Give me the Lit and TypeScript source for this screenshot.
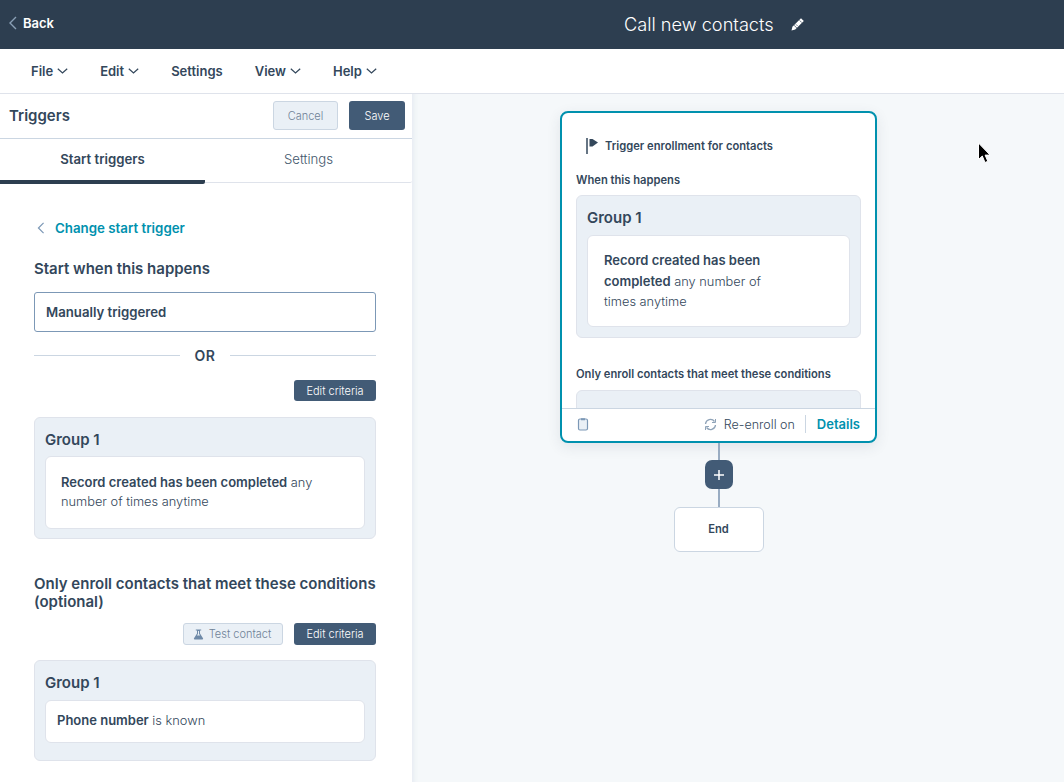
import { LitElement, html, css } from "lit";
import { customElement } from "lit/decorators.js";

const chev = html`<svg class="chev" width="11" height="6" viewBox="0 0 11 6"><path d="M.8.7 5.500 5 10.200.7" fill="none" stroke="currentColor" stroke-width="1.200"/></svg>`;
const back = (c: string, h: number) => html`<svg width="8" height="${h}" viewBox="0 0 8 14"><path d="M7 1 1 7l6 6" fill="none" stroke="${c}" stroke-width="1.400"/></svg>`;

@customElement("app-root")
export class AppRoot extends LitElement {
  static styles = css`
    :host { display: block; width: 1064px; height: 782px; overflow: hidden; position: relative; font-family: Inter, "Noto Sans", sans-serif; color: #33475b; background: #fff; font-size: 13px; }
    * { box-sizing: border-box; }
    b { font-weight: 600; }
    .top { height: 49px; background: #2d3e50; display: grid; grid-template-columns: 1fr 1fr; color: #fff; }
    .backlink { display: flex; align-items: center; gap: 6px; padding: 0 0 3px 9px; font-weight: 600; font-size: 13px; }
    .title { display: flex; align-items: center; gap: 16px; padding: 0 0 1px 92px; font-size: 18.200px; font-weight: 300; height: 49px; white-space: nowrap; }
    .menu { height: 45px; display: flex; align-items: center; padding: 0 0 0 31px; gap: 32px; border-bottom: 1px solid #dfe3eb; font-weight: 600; font-size: 13px; }
    .menu span { display: flex; align-items: center; gap: 4px; }
    .main { display: flex; height: 688px; }
    .panel { width: 412px; flex: none; height: 688px; overflow: hidden; background: #fff; }
    .phead { height: 45px; display: flex; align-items: center; padding: 0 7px 1px 9px; border-bottom: 1px solid #cbd6e2; }
    .phead h1 { font-size: 15px; font-weight: 600; margin: 0; flex: 1; }
    .btn { display: inline-flex; align-items: center; justify-content: center; border-radius: 3px; font-size: 11px; font-weight: 300; }
    .cancel { width: 65px; height: 29px; background: #eaf0f6; border: 1px solid #cbd6e2; color: #6f8297; margin-right: 11px; }
    .save { width: 56px; height: 29px; background: #425b76; color: #fff; }
    .tabs { display: flex; height: 45px; }
    .tab { width: 205px; height: 45px; display: flex; align-items: center; justify-content: center; padding-bottom: 1px; font-weight: 600; font-size: 13.200px; border-bottom: 4px solid #2d3e50; border-radius: 0 0 2px 0; }
    .tab.off { flex: 1; font-weight: 300; color: #42566b; border-bottom: 1px solid #dfe3eb; padding: 0 0 4px; margin-bottom: 1px; height: 44px; }
    .content { padding: 35px 36px 0 34px; }
    .change { display: flex; align-items: center; gap: 10px; padding-left: 3px; height: 18px; color: #0091ae; font-weight: 600; font-size: 13.300px; }
    h2 { font-size: 15px; font-weight: 600; margin: 0; line-height: 18px; }
    .start { margin-top: 23px; }
    .input { margin-top: 14px; height: 40px; border: 1px solid #7c98b6; border-radius: 3px; display: flex; align-items: center; padding-left: 11px; font-weight: 600; font-size: 13.200px; }
    .or { margin-top: 14px; display: flex; align-items: center; gap: 14px; font-weight: 600; font-size: 14px; letter-spacing: .6px; height: 18px; }
    .or i { flex: 1; height: 1px; background: #cbd6e2; }
    .actions { display: flex; justify-content: flex-end; gap: 11px; }
    .a1 { margin-top: 16px; }
    .edit { width: 82px; height: 21px; background: #425b76; color: #fff; }
    .edit.tall { height: 22px; }
    .test { width: 100px; height: 22px; background: #eaf0f6; border: 1px solid #cbd6e2; color: #6f8297; gap: 5px; padding-right: 2px; }
    .group { background: #eaf0f6; border: 1px solid #dfe3eb; border-radius: 6px; padding: 12px 10px 0; }
    .group h3 { margin: 0 0 7px; font-size: 15px; font-weight: 600; line-height: 20px; }
    .rule { background: #fff; border: 1px solid #dfe3eb; border-radius: 6px; font-size: 12.800px; font-weight: 300; line-height: 19px; }
    .rule b { font-weight: 600; font-size: 13px; }
    .g1 { margin-top: 16px; height: 122px; }
    .group.g1 h3 { margin-bottom: 6px; }
    .g1 .rule { height: 73px; padding: 16px 15px 0; }
    .only { margin-top: 36px; }
    .a2 { margin-top: 12px; align-items: flex-end; }
    .g2 { margin-top: 15px; height: 101px; }
    .g2 .rule { height: 43px; padding: 10px 11px; }
    .canvas { flex: 1; background: #f5f8fa; box-shadow: inset 6px 0 5px -4px #e6ebf1; padding: 17px 0 0 148px; display: flex; flex-direction: column; align-items: flex-start; }
    .flow { width: 317px; display: flex; flex-direction: column; align-items: center; }
    .card { width: 317px; height: 332px; background: #fff; border: 2px solid #0091ae; border-radius: 8px; box-shadow: 0 4px 14px rgba(45,62,80,.1); display: flex; flex-direction: column; overflow: hidden; }
    .cbody { height: 295px; overflow: hidden; padding: 0 14px; flex: none; }
    .chead { display: flex; align-items: center; gap: 6px; padding: 24px 0 0 10px; font-size: 11.200px; font-weight: 600; height: 42px; }
    .lbl { font-size: 11.200px; font-weight: 600; line-height: 14px; }
    .l1 { margin-top: 18px; }
    .group.cg1 { margin-top: 8px; height: 143px; padding: 12px 10px; }
    .cg1 .rule { height: 92px; padding: 14px 16px; line-height: 20px; width: 263px; }
    .cg1 .wrap { display: block; width: 175px; }
    .l2 { margin-top: 29px; }
    .cg2 { margin-top: 9px; height: 60px; }
    .cfoot { flex: 1; border-top: 1px solid #cbd6e2; display: flex; align-items: center; padding: 0 15px 2px 15px; font-size: 12.500px; font-weight: 300; }
    .cfoot .sp { flex: 1; }
    .cfoot .re { margin: 0 10px 0 7px; }
    .cfoot .det { border-left: 1px solid #cbd6e2; padding-left: 11px; height: 18px; display: flex; align-items: center; color: #0091ae; font-weight: 600; font-size: 13px; }
    .line { width: 2px; background: #99acc2; }
    .plus { width: 28px; height: 29px; border-radius: 7px; background: #425b76; display: flex; align-items: center; justify-content: center; }
    .end { width: 90px; height: 45px; background: #fff; border: 1px solid #cbd6e2; border-radius: 6px; display: flex; align-items: center; justify-content: center; padding-bottom: 1px; font-size: 11.200px; font-weight: 600; }
    .cursor { position: absolute; left: 977px; top: 142px; }
  `;

  render() {
    return html`
      <div class="top">
        <div class="backlink">${back("#8aa0b6", 14)}<span>Back</span></div>
        <div class="title"><span>Call new contacts</span>
          <svg width="15" height="15" viewBox="0 0 15 15"><path d="M11 1.200 13.800 4 5.200 12.600 1.500 13.500l.9-3.700z" fill="#fff"/><path d="M9.600 3.400l2.200 2.200M4 8.200l2.800 2.800M6 7.400l1.500 1.500" stroke="#2d3e50" stroke-width=".7" fill="none"/></svg>
        </div>
      </div>
      <div class="menu">
        <span>File ${chev}</span><span>Edit ${chev}</span><span>Settings</span><span>View ${chev}</span><span>Help ${chev}</span>
      </div>
      <div class="main">
        <div class="panel">
          <div class="phead"><h1>Triggers</h1><span class="btn cancel">Cancel</span><span class="btn save">Save</span></div>
          <div class="tabs"><div class="tab">Start triggers</div><div class="tab off">Settings</div></div>
          <div class="content">
            <div class="change">${back("#7c98b6", 12)}<span>Change start trigger</span></div>
            <h2 class="start">Start when this happens</h2>
            <div class="input">Manually triggered</div>
            <div class="or"><i></i><span>OR</span><i></i></div>
            <div class="actions a1"><span class="btn edit">Edit criteria</span></div>
            <div class="group g1"><h3>Group 1</h3>
              <div class="rule"><b>Record created has been completed</b> any number of times anytime</div></div>
            <h2 class="only">Only enroll contacts that meet these conditions (optional)</h2>
            <div class="actions a2">
              <span class="btn test"><svg width="11" height="11" viewBox="0 0 11 11"><path d="M2.800.6h5.400v1H7v2.800l3 4.900c.3.600 0 1.100-.6 1.100H1.600C1 10.400.7 9.900 1 9.300l3-4.900V1.600H2.800z" fill="#6f8aa8"/><path d="M5 2h1v2.700l1 1.800H4l1-1.800z" fill="#eaf0f6"/></svg>Test contact</span>
              <span class="btn edit tall">Edit criteria</span>
            </div>
            <div class="group g2"><h3>Group 1</h3><div class="rule"><b>Phone number</b> is known</div></div>
          </div>
        </div>
        <div class="canvas">
          <div class="flow">
            <div class="card">
              <div class="cbody">
                <div class="chead">
                  <svg width="13" height="16" viewBox="0 0 13 16"><path d="M1 0v16" stroke="#33475b" stroke-width="1.500"/><path d="M3.500 1h3l5.500 3.500L6.500 8.500h-3z" fill="#33475b"/></svg>
                  <span>Trigger enrollment for contacts</span>
                </div>
                <div class="lbl l1">When this happens</div>
                <div class="group cg1"><h3>Group 1</h3>
                  <div class="rule"><span class="wrap"><b>Record created has been completed</b> any number of times anytime</span></div></div>
                <div class="lbl l2">Only enroll contacts that meet these conditions</div>
                <div class="group cg2"></div>
              </div>
              <div class="cfoot">
                <svg width="12" height="14" viewBox="0 0 12 14"><rect x="1.500" y="2" width="9" height="11" rx="1.500" fill="#eaf0f6" stroke="#7c98b6" stroke-width="1.200"/><path d="M4 1.200h4v2H4z" fill="#7c98b6"/></svg>
                <span class="sp"></span>
                <svg width="13" height="13" viewBox="0 0 13 13"><path d="M1.500 6A5 5 0 0 1 10.500 3.500M11.500 7A5 5 0 0 1 2.500 9.500" fill="none" stroke="#8fa3b8" stroke-width="1.300"/><path d="M11.500 1v3.500H8M1.500 12V8.500H5" fill="none" stroke="#8fa3b8" stroke-width="1"/></svg>
                <span class="re">Re-enroll on</span>
                <span class="det">Details</span>
              </div>
            </div>
            <div class="line" style="height:17px"></div>
            <div class="plus"><svg width="12" height="12" viewBox="0 0 12 12"><path d="M6 1v10M1 6h10" stroke="#fff" stroke-width="1.500"/></svg></div>
            <div class="line" style="height:18px"></div>
            <div class="end">End</div>
          </div>
        </div>
      </div>
      <svg class="cursor" width="15" height="23" viewBox="0 0 15 23"><path d="M1.500 1v16.500l3.800-3.500 2.700 6.500 2.800-1.200-2.700-6.200h5z" fill="#000" stroke="#fff" stroke-width="1"/></svg>
    `;
  }
}
